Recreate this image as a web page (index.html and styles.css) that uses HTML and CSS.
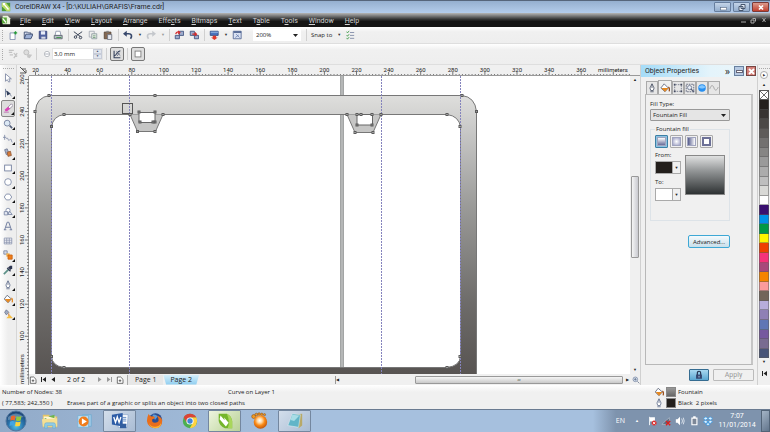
FILE: index.html
```html
<!DOCTYPE html>
<html lang="en">
<head>
    <meta charset="UTF-8">
    <meta name="viewport" content="width=device-width, initial-scale=1.0">
    <title>CorelDRAW X4 - [D:\KULIAH\GRAFIS\Frame.cdr]</title>
    <link rel="stylesheet" href="styles.css">
</head>
<body>

<!-- Title bar -->
<header class="title-bar">
    <svg class="icon" viewBox="0 0 12 12"><rect x="1" y="1" width="10" height="10" fill="#4d9a38"/><path d="M1 1h5l5 6v4H7L1 5z" fill="#b9dc68"/><path d="M3 2l6 7M3 4V2h2" stroke="#fff" stroke-width="1.6" fill="none"/></svg>
    <h1>CorelDRAW X4 - [D:\KULIAH\GRAFIS\Frame.cdr]</h1>
    <div class="win-buttons">
        <button aria-label="Minimize"><svg viewBox="0 0 16 9"><rect x="5.500" y="4.500" width="6" height="2.500" fill="#fff" stroke="#556780" stroke-width=".6"/></svg></button>
        <button aria-label="Restore"><svg viewBox="0 0 16 9"><path d="M7 1.500h4v4H7zM5 3.500h4v4H5z" fill="#e8eef7" stroke="#46566e"/></svg></button>
        <button class="close" aria-label="Close"><svg viewBox="0 0 16 9"><path d="M6 2.500l4 4M10 2.500l-4 4" stroke="#fff" stroke-width="1.700"/></svg></button>
    </div>
</header>

<nav class="menu-bar">
    <svg class="icon" viewBox="0 0 12 12"><path d="M2 1h6l3 3v7H2z" fill="#e9f2dc"/><path d="M1 3h6v7H1z" fill="#58a838"/><path d="M2 4l4 5" stroke="#fff" stroke-width="1.500"/></svg>
    <a href="#"><u>F</u>ile</a>
    <a href="#"><u>E</u>dit</a>
    <a href="#"><u>V</u>iew</a>
    <a href="#"><u>L</u>ayout</a>
    <a href="#"><u>A</u>rrange</a>
    <a href="#">Effe<u>c</u>ts</a>
    <a href="#"><u>B</u>itmaps</a>
    <a href="#"><u>T</u>ext</a>
    <a href="#">T<u>a</u>ble</a>
    <a href="#">T<u>o</u>ols</a>
    <a href="#"><u>W</u>indow</a>
    <a href="#"><u>H</u>elp</a>
    <svg class="doc-buttons" viewBox="0 0 28 8"><path d="M2 6h5M13.500 2.500h3v3M12 4h3v3h-3zM23.500 2l3 4M26.500 2l-3 4" stroke="#aaa" fill="none"/></svg>
</nav>

<!-- Standard toolbar -->
<div class="toolbar standard">
    <i class="grip"></i>
    <button aria-label="New"><svg class="icon" viewBox="0 0 12 12"><path d="M2.500 3.500h6v8h-6z" fill="#fff" stroke="#7888a8"/><path d="M7 3.500h4M9 1.500v4" stroke="#259b37" stroke-width="1.600"/></svg></button>
    <button aria-label="Open"><svg class="icon" viewBox="0 0 12 12"><path d="M1.500 10V2.500h4l1 1h3V5" fill="#dfe5f4" stroke="#314268"/><path d="M1.500 10.500L3.500 5H12l-2.500 5.500z" fill="#9db0d6" stroke="#314268"/></svg></button>
    <button aria-label="Save"><svg class="icon" viewBox="0 0 12 12"><path d="M1.500 1.500h9v9h-9z" fill="#50619f" stroke="#333f78"/><path d="M3.500 1.500h5v4h-5z" fill="#e8ecf8"/><path d="M4 8h5v2.500H4z" fill="#d5d8e5"/></svg></button>
    <button aria-label="Print"><svg class="icon" viewBox="0 0 12 12"><path d="M3.500 1.500h5l1 5h-7z" fill="#fff" stroke="#8a94a8"/><path d="M1.500 6.500h9.500v4H1.500z" fill="#b7bec5" stroke="#59616b"/><path d="M4 9h6" stroke="#35943d"/></svg></button>
    <i class="sep"></i>
    <button aria-label="Cut"><svg class="icon" viewBox="0 0 12 12"><g fill="none" stroke="#3d4658" stroke-width="1.200"><path d="M1 2l8 6M11 2L4 7"/><circle cx="3" cy="8.500" r="1.500"/><circle cx="9" cy="9" r="1.500"/></g></svg></button>
    <button aria-label="Copy"><svg class="icon" viewBox="0 0 12 12"><path d="M1.500 1.500h6v7h-6z" fill="#eee" stroke="#a3a9b3"/><path d="M4.500 4.500h6v6h-6z" fill="#e4ebe3" stroke="#8c9aa0"/><path d="M6 7h3M6 9h3" stroke="#6f9a78"/></svg></button>
    <button aria-label="Paste"><svg class="icon" viewBox="0 0 12 12"><path d="M1.500 2.500h8v8h-8z" fill="#846852" stroke="#564335"/><path d="M4 1h3v2H4z" fill="#888"/><path d="M5.500 5.500h5v6h-5z" fill="#e5e8ef" stroke="#6d7482"/></svg></button>
    <i class="sep"></i>
    <button aria-label="Undo"><svg class="icon" viewBox="0 0 12 12"><path d="M3 4.500h4c3 0 4.500 2.500 2 6" stroke="#36476b" stroke-width="2" fill="none"/><path d="M0 4.500L4.500 1v7z" fill="#36476b"/></svg></button>
    <span class="arrow">▼</span>
    <button aria-label="Redo"><svg class="icon" viewBox="0 0 12 12"><path d="M9 4.500H5c-3 0-4.500 2.500-2 6" stroke="#c4c7cc" stroke-width="2" fill="none"/><path d="M12 4.500L7.500 1v7z" fill="#c4c7cc"/></svg></button>
    <span class="arrow off">▼</span>
    <i class="sep"></i>
    <button aria-label="Import"><svg class="icon" viewBox="0 0 12 12"><path d="M6.500 1.500h5v5h-5zM1.500 6.500h5v4h-5z" fill="#9eaccd" stroke="#3c4e7b"/><path d="M2 5c1-3 3-3 4-2M5 1l2 2-2 2" stroke="#d52b2b" stroke-width="1.400" fill="none"/></svg></button>
    <button aria-label="Export"><svg class="icon" viewBox="0 0 12 12"><path d="M1.500 1.500h5v5h-5zM6.500 6.500h5v4h-5z" fill="#9eaccd" stroke="#3c4e7b"/><path d="M4 5h5M7 3l2 2-2 2" stroke="#d52b2b" stroke-width="1.500" fill="none"/></svg></button>
    <i class="sep"></i>
    <button aria-label="Application launcher"><svg class="icon" viewBox="0 0 12 12"><path d="M1.500 1.500h9.500v5H1.500z" fill="#4b73bd" stroke="#304980"/><path d="M2 2h9v1.500H2z" fill="#8aacdf"/><path d="M4.500 7h4v2h2L6.500 12l-4-3h2z" fill="#e03a2d"/></svg></button>
    <span class="arrow">▼</span>
    <button aria-label="Welcome screen"><svg class="icon" viewBox="0 0 12 12"><path d="M1.500 1.500h9.500v9H1.500z" fill="#d9e1f2" stroke="#4f6491"/><path d="M2 2.500h9" stroke="#4f6491" stroke-width="2"/><path d="M4 9l4-3M5 5l4 4" stroke="#6a7fae"/></svg></button>
    <select class="zoom-level" aria-label="Zoom level"><option>200%</option></select>
    <i class="sep"></i>
    <button class="snap">Snap to</button>
    <span class="arrow">▼</span>
    <button aria-label="Options"><svg class="icon" viewBox="0 0 12 12"><path d="M6 3h5M6 6.500h5M6 10h5" stroke="#7b86a2"/><path d="M2 2l1 1.500L5 1M2 6l1 1.500L5 5M2 9.500L3 11l2-2.500" stroke="#3a9a44" fill="none"/></svg></button>
</div>

<!-- Eraser property bar -->
<div class="toolbar property">
    <i class="grip"></i>
    <svg class="icon" viewBox="0 0 12 12"><path d="M1 1.500h6M1 4h4M2 7h4M7 5l4 4M11 5L7 11" stroke="#c3c3c3" stroke-width="1.500"/></svg>
    <svg class="icon" viewBox="0 0 12 12"><circle cx="4" cy="4" r="3" fill="#ddd" stroke="#bbb"/><path d="M5 6l6 1-3 4-3-1z" fill="#c6c6c6"/></svg>
    <i class="sep"></i>
    <svg class="icon thick" viewBox="0 0 12 12"><circle cx="6" cy="6" r="4" fill="#fff" stroke="#a0a4ac"/><path d="M3 6h6" stroke="#8b91a0"/></svg>
    <div class="spinner">
        <input type="text" value="3,0 mm" aria-label="Eraser thickness">
        <span class="spin"><b>▲</b><b>▼</b></span>
    </div>
    <i class="sep"></i>
    <button class="pressed" aria-label="Auto-reduce nodes"><svg class="icon" viewBox="0 0 12 12"><path d="M2.500 2v8.500H10M3 8c3 0 2-5 7-6" stroke="#34405b" fill="none" stroke-width="1.300"/><path d="M5 3l5 5M6 8.500l3-4" stroke="#5a657f"/></svg></button>
    <i class="sep"></i>
    <button class="pressed" aria-label="Eraser shape"><svg class="icon" viewBox="0 0 12 12"><rect x="2.500" y="2.500" width="7" height="7" fill="#fff" stroke="#777"/></svg></button>
</div>

<main class="workspace">
    <!-- Toolbox -->
    <aside class="toolbox">
        <i class="grip-h"></i>
        <div class="tools">
            <button aria-label="Pick"><svg class="icon" viewBox="0 0 12 12"><path d="M3 1v9l2-2 2 3 1.500-1L7 7h3z" fill="#fff" stroke="#7984a0"/></svg></button>
            <button class="more" aria-label="Shape"><svg class="icon" viewBox="0 0 12 12"><path d="M3 1v10M3 4c5 0 5 3 7 6" stroke="#6a7895" fill="none"/><path d="M4 3l5 4-4 2z" fill="#2c3a58"/></svg></button>
            <button class="more on" aria-label="Eraser"><svg class="icon" viewBox="0 0 12 12"><path d="M6 5l4-4 2 2-4 4z" fill="#fff" stroke="#8a7f96"/><path d="M2 8l4-3.500L8.500 7 5 10H3z" fill="#d944b7"/><path d="M1 11h6" stroke="#b866ad"/></svg></button>
            <button class="more" aria-label="Zoom"><svg class="icon" viewBox="0 0 12 12"><circle cx="5" cy="5" r="3.500" fill="#dce8f4" stroke="#6b7897"/><path d="M8 8l3 3" stroke="#54607c" stroke-width="2"/></svg></button>
            <button class="more" aria-label="Freehand"><svg class="icon" viewBox="0 0 12 12"><path d="M2 1v6M0 4h4M4 6c2-4 2 4 4 1s2 2 3 3" stroke="#7c87a4" fill="none"/></svg></button>
            <button class="more" aria-label="Smart fill"><svg class="icon" viewBox="0 0 12 12"><path d="M2 2l3-1 2 5-3 2z" fill="#a9b3c9" stroke="#6c7690"/><path d="M5 5l4-1 1 5-4 1z" fill="#d97b35" stroke="#8e5a3c"/></svg></button>
            <button class="more" aria-label="Rectangle"><svg class="icon" viewBox="0 0 12 12"><rect x="2" y="2.500" width="8" height="7" fill="#fff" stroke="#6b7899"/></svg></button>
            <button class="more" aria-label="Ellipse"><svg class="icon" viewBox="0 0 12 12"><circle cx="6" cy="6" r="4" fill="#fff" stroke="#7885a4"/></svg></button>
            <button class="more" aria-label="Polygon"><svg class="icon" viewBox="0 0 12 12"><path d="M4 2.500h4L10.500 6 8 9.500H4L1.500 6z" fill="#fff" stroke="#7885a4"/></svg></button>
            <button class="more" aria-label="Basic shapes"><svg class="icon" viewBox="0 0 12 12"><circle cx="6" cy="4" r="2.500" fill="#fff" stroke="#7885a4"/><path d="M1.500 5.500h4v4h-4zM8 5l3 4H6z" fill="#e5e9f3" stroke="#7885a4"/></svg></button>
            <button aria-label="Text"><svg class="icon" viewBox="0 0 12 12"><path d="M2 10.500L5 1.500h2l3 9M3.500 7.500h5M1 10.500h3M8 10.500h3" stroke="#7481a2" stroke-width="1.200" fill="none"/></svg></button>
            <button aria-label="Table"><svg class="icon" viewBox="0 0 12 12"><path d="M1.500 2.500h9v7h-9zM1.500 5h9M1.500 7.500h9M4.500 2.500v7M7.500 2.500v7" stroke="#8993ad" fill="#fff"/></svg></button>
            <button class="more" aria-label="Blend"><svg class="icon" viewBox="0 0 12 12"><path d="M1 1h4v4H1z" fill="#d4dae7" stroke="#7783a1"/><path d="M4 4h4v4H4z" fill="#f4b450"/><path d="M6 6h5v5H6z" fill="#ef7d19" stroke="#c96414"/></svg></button>
            <button class="more" aria-label="Eyedropper"><svg class="icon" viewBox="0 0 12 12"><path d="M1 11l6-6" stroke="#5c9088" stroke-width="2"/><path d="M6 3l3 3 2-2V1H8.500z" fill="#2d3550"/><path d="M5 3.500l4 4" stroke="#2d3550" stroke-width="1.500"/></svg></button>
            <button class="more" aria-label="Outline"><svg class="icon" viewBox="0 0 12 12"><path d="M6 1L3.500 6l1 3h3l1-3zM6 1v5M4 10.500h4" stroke="#65728f" fill="#fff"/></svg></button>
            <button class="more" aria-label="Fill"><svg class="icon" viewBox="0 0 12 12"><path d="M5 1.500L10 6l-4 4.500L1.500 6z" fill="#fff" stroke="#5b6478"/><path d="M2 6h8l-4 4.500z" fill="#e58820"/><path d="M10 5c2 1 1.500 3 1 5" stroke="#e58820" stroke-width="1.500" fill="none"/></svg></button>
            <button class="more" aria-label="Interactive fill"><svg class="icon" viewBox="0 0 12 12"><path d="M4 1l3 3-3 3-2-3z" fill="#a2acc2" stroke="#6c7690"/><path d="M7 4l1 4H6z" fill="#cf7d38"/><path d="M4 11l4-4 4 4z" fill="#f7bd42"/></svg></button>
        </div>
    </aside>

    <section class="drawing">
        <svg class="corner" viewBox="0 0 12 11"><path d="M3 2l6 6M9 5v3H6M3 8h3M5 4h4" stroke="#555" fill="none"/></svg>
        <svg class="ruler-x" id="rulerX"><text x="584" y="7" text-anchor="middle">millimeters</text></svg>
        <svg class="ruler-y" id="rulerY"><text transform="translate(7 293) rotate(-90)" text-anchor="middle">millimeters</text></svg>

        <svg class="canvas">
            <defs>
                <linearGradient id="steel" gradientUnits="userSpaceOnUse" x1="0" y1="96" x2="0" y2="374">
                    <stop offset="0" stop-color="#dededc"/>
                    <stop offset=".12" stop-color="#c9c9c8"/>
                    <stop offset=".4" stop-color="#9a9a98"/>
                    <stop offset=".75" stop-color="#6d6b69"/>
                    <stop offset="1" stop-color="#585452"/>
                </linearGradient>
            </defs>
            <g transform="translate(-29 -76)">
                <rect x="340" y="76" width="4" height="298" fill="#b5b7b7"/>
                <path d="M340.500 76v298M343.500 76v298" stroke="#a3a5a5"/>
                <!-- frame body with its opening -->
                <path fill="url(#steel)" stroke="#777" fill-rule="evenodd" d="M35.500 380V111.500Q36 97 50 95.500H462Q475 97 476.500 111.500V380z M51.500 127V356Q52 366 64 367.500H447Q460 366 460.500 356V127Q459 116 447 114.500H64Q53 116 51.500 127z"/>
                <!-- clips -->
                <path d="M130 114.500L137.500 131.500H155.500L163 114.500" fill="#c6c6c5" stroke="#777"/>
                <path d="M347 114.500L355 132.500H373L381 114.500" fill="#c6c6c5" stroke="#777"/>
                <path d="M139 112.500h16v10h-16zM357 114.500h15.500v10.500H357z" fill="#fff" stroke="#666"/>
                <path d="M51.500 76v298M129.500 76v298M381.500 76v298M460.500 76v298" stroke="#8584bd" stroke-dasharray="2 1"/>
                <rect x="122.500" y="103.500" width="10" height="10" fill="none" stroke="#555"/>
                <g id="nodes"></g>
            </g>
        </svg>

        <div class="scroll-y">
            <span>▲</span>
            <i class="thumb"></i>
            <span>▼</span>
        </div>

        <div class="page-bar">
            <svg class="icon" viewBox="0 0 12 12"><path d="M2 1.500h5L10.500 5v6H2zM4 7h4M6 5v4" stroke="#333" fill="#fff"/></svg>
            <button aria-label="First page"><svg viewBox="0 0 7 7"><path d="M1 1h1v5H1zM6 1v5L2.500 3.500z"/></svg></button>
            <button aria-label="Previous page"><svg viewBox="0 0 7 7"><path d="M5 1v5L1.500 3.500z"/></svg></button>
            <span class="count">2 of 2</span>
            <button class="off" aria-label="Next page"><svg viewBox="0 0 7 7"><path d="M2 1v5l3.500-2.500z"/></svg></button>
            <button class="off" aria-label="Last page"><svg viewBox="0 0 7 7"><path d="M5 1h1v5H5zM1 1v5l3.500-2.500z"/></svg></button>
            <svg class="icon" viewBox="0 0 12 12"><path d="M2 1.500h5L10.500 5v6H2zM4 7h4M6 5v4" stroke="#333" fill="#fff"/></svg>
            <div class="tabs">
                <a class="tab" href="#">Page 1</a>
                <a class="tab current" href="#">Page 2</a>
            </div>
            <div class="scroll-x">
                <span>◀</span>
                <div class="track"><i class="thumb">ııı</i></div>
                <span>▶</span>
                <svg class="icon" viewBox="0 0 12 12"><circle cx="5" cy="5" r="3.500" fill="#dce8f4" stroke="#6b7897"/><path d="M8 8l3 3M5 3v4M3 5h4" stroke="#54607c"/></svg>
            </div>
        </div>
    </section>

    <!-- Object Properties docker -->
    <aside class="docker">
        <div class="docker-head">
            <h2>Object Properties</h2>
            <span>»</span>
            <button aria-label="Roll up"><svg viewBox="0 0 9 9"><rect x="1.500" y="3.500" width="6" height="2" fill="#fff" stroke="#667"/></svg></button>
            <button class="close" aria-label="Close docker"><svg viewBox="0 0 9 9"><path d="M2 2l5 5M7 2L2 7" stroke="#fff" stroke-width="1.800"/></svg></button>
        </div>
        <div class="docker-tabs">
            <button aria-label="Outline"><svg class="icon" viewBox="0 0 12 12"><path d="M6 1L3.500 6l1 3h3l1-3zM6 1v5M4 10.500h4" stroke="#4b5365" fill="#fff"/></svg></button>
            <button class="current" aria-label="Fill"><svg class="icon" viewBox="0 0 12 12"><path d="M5 1L10 6l-4 4.500L1 6z" fill="#fff" stroke="#5b6478"/><path d="M1.500 6h8.500l-4 4.500z" fill="#e58820"/><path d="M10 5c2 1 1.500 3 1 5" stroke="#9a4c18" stroke-width="1.500" fill="none"/></svg></button>
            <button aria-label="General"><svg class="icon" viewBox="0 0 12 12"><rect x="2" y="2" width="8" height="8" fill="none" stroke="#555d74" stroke-dasharray="1 1"/><path d="M1 1h2v2H1zM9 1h2v2H9zM1 9h2v2H1zM9 9h2v2H9z" fill="#444b60"/></svg></button>
            <button aria-label="Detail"><svg class="icon" viewBox="0 0 12 12"><rect x="1.500" y="1.500" width="9" height="9" fill="none" stroke="#555d74" stroke-dasharray="2 1"/><circle cx="5.500" cy="5.500" r="2.500" fill="#e9eef6" stroke="#6c7790"/><path d="M7 7l4 4" stroke="#555d74" stroke-width="1.500"/></svg></button>
            <button aria-label="Internet"><svg class="icon" viewBox="0 0 12 12"><circle cx="6" cy="6" r="4.500" fill="#278ff0"/><path d="M2 5c2-3 6-3 8 0-2 2-6 2-8 0z" fill="#83c7ff"/></svg></button>
            <button aria-label="Curve"><svg class="icon" viewBox="0 0 12 12"><path d="M1 7c2-6 4-4 5-1s3 4 5-1" stroke="#9b9b9b" fill="none"/></svg></button>
        </div>
        <div class="docker-panel">
            <label for="fillType">Fill Type:</label>
            <select id="fillType"><option>Fountain Fill</option></select>
            <fieldset>
                <legend>Fountain fill</legend>
                <div class="fill-kinds">
                    <button class="linear on" aria-label="Linear"><i></i></button>
                    <button class="radial" aria-label="Radial"><i></i></button>
                    <button class="conical" aria-label="Conical"><i></i></button>
                    <button class="square" aria-label="Square"><i></i></button>
                </div>
                <div class="fill-colors">
                    <div class="pickers">
                        <span>From:</span>
                        <button class="picker from" aria-label="From color"><i></i><b>▼</b></button>
                        <span>To:</span>
                        <button class="picker to" aria-label="To color"><i></i><b>▼</b></button>
                    </div>
                    <div class="preview"></div>
                </div>
            </fieldset>
            <button class="advanced">Advanced...</button>
        </div>
        <div class="docker-foot">
            <button class="lock" aria-label="Lock"><svg class="icon" viewBox="0 0 12 12"><path d="M4 6V3.500a2 2 0 0 1 4 0V6" stroke="#26334f" stroke-width="1.400" fill="none"/><rect x="2.500" y="5.500" width="7" height="5" fill="#34466f"/><path d="M6 7v2" stroke="#c8def2"/></svg></button>
            <button class="apply" disabled>Apply</button>
        </div>
    </aside>

    <!-- Color palette -->
    <aside class="palette">
        <i class="grip-h"></i>
        <button class="round" aria-label="Palette menu">▶</button>
        <span>▲</span>
        <button class="none" aria-label="No color"><svg viewBox="0 0 9 9"><path d="M0 0l9 9M9 0L0 9" stroke="#333" stroke-width=".8"/></svg></button>
        <div class="swatches" id="swatches"></div>
        <span>▼</span>
        <button class="expand" aria-label="Expand palette"><svg viewBox="0 0 7 7"><path d="M1 1h1v5H1zM6 1v5L2.500 3.500z"/></svg></button>
    </aside>
</main>

<footer class="status-bar">
    <div class="status-row">
        <span class="node-count">Number of Nodes: 38</span>
        <span class="layer">Curve on Layer 1</span>
        <span class="paint"><svg class="icon" viewBox="0 0 12 12"><path d="M5 1.500L10 6l-4 4.500L1.500 6z" fill="#fff" stroke="#5b6478"/><path d="M2 6h8l-4 4.500z" fill="#e58820"/><path d="M10 5c2 1 1.500 3 1 5" stroke="#9a4c18" stroke-width="1.500" fill="none"/></svg><i class="chip fountain"></i>Fountain</span>
    </div>
    <div class="status-row">
        <span class="coords">( 77,583; 242,350 )</span>
        <span class="hint">Erases part of a graphic or splits an object into two closed paths</span>
        <span class="paint"><svg class="icon" viewBox="0 0 12 12"><path d="M6 1L3.500 6l1 3h3l1-3zM6 1v5M4 10.500h4" stroke="#65728f" fill="#fff"/></svg><i class="chip black"></i>Black&nbsp; 2 pixels</span>
    </div>
</footer>

<!-- Windows taskbar -->
<div class="taskbar">
    <button class="start" aria-label="Start"><svg viewBox="0 0 22 22">
        <defs><radialGradient id="orb" cx=".5" cy=".75" r=".7"><stop offset="0" stop-color="#53c5ea"/><stop offset=".5" stop-color="#2b77ae"/><stop offset="1" stop-color="#1d4474"/></radialGradient></defs>
        <circle cx="11" cy="11" r="10" fill="url(#orb)" stroke="#52779f"/><path d="M3 7q8-7 16 0-8 1-16 3z" fill="#fff" opacity=".25"/>
        <path d="M6 6.500q2.500-1.500 4.500-.5l-.7 4.500q-2-1-4.500.3z" fill="#e9682e"/><path d="M11.500 6.300q2.500 1 5-.3l-.8 4.600q-2.500 1-4.800 0z" fill="#91c83e"/><path d="M5 11.700q2.500-1.500 4.600-.2L9 15.700q-2-1-4.500.3z" fill="#42a5e4"/><path d="M10.700 11.700q2.500 1 5-.2l-.8 4.300q-2.500 1-4.800.2z" fill="#fbd23d"/></svg></button>
    <a class="task" href="#" aria-label="Explorer"><svg viewBox="0 0 20 20"><path d="M2 3h7l1 2h8v12H2z" fill="#e5c466"/><path d="M3 5h13v9H3z" fill="#fff7d5"/><path d="M4 7h2v1H4zM8 5l7-2v4z" fill="#6fb44c"/><path d="M1 8l17-1v9H2z" fill="#f5df93"/><path d="M4 18v-4q0-2 2-2h8q2 0 2 2v4h-3v-3H7v3z" fill="#8fcbe6" stroke="#66a7ca" stroke-width=".6"/></svg></a>
    <a class="task" href="#" aria-label="Media Player"><svg viewBox="0 0 20 20"><path d="M7 3h10v13H7z" fill="#9ecae8" stroke="#77abd0"/><path d="M2 4h12v13H2z" fill="#bfe0f4" stroke="#7bb1d4"/><circle cx="8.500" cy="10.500" r="5.500" fill="#f07c1c"/><path d="M6.500 7l5.500 3.500-5.500 3.500z" fill="#fff"/></svg></a>
    <a class="task open" href="#" aria-label="Word"><svg viewBox="0 0 20 20"><path d="M8 3h11l-1 14H8z" fill="#fff" stroke="#7799c7" stroke-width=".6"/><path d="M13 6h4M13 8h4M13 10h4M11 14h6" stroke="#5783c0"/><path d="M1 3l12-2v15L1 14z" fill="#2d5ca6"/><path d="M3 5.500l2 6 2-6 2 6 2-6" stroke="#fff" stroke-width="1.500" fill="none"/><path d="M10 13h7v5h-7z" fill="#345f9f"/></svg></a>
    <a class="task" href="#" aria-label="Firefox"><svg viewBox="0 0 20 20"><circle cx="10.500" cy="9" r="7.500" fill="#2b4d91"/><path d="M7 3q4-1 6 2l-3 4z" fill="#5c9bd6"/><path d="M3 2q0 2 3 3 2-1 4 1-1 2-3 2-1 4 3 4 3 0 4-2 0-4-2-6 6 2 6 6 0 8-8 8-8-1-9-8 0-4 2-8z" fill="#e96e1c"/><path d="M3 12q3 6 9 4 4-1 5-5 0 7-7 7-5 0-7-6z" fill="#f9b534"/></svg></a>
    <a class="task" href="#" aria-label="Chrome"><svg viewBox="0 0 20 20"><circle cx="10" cy="10" r="8" fill="#4caf50"/><path d="M3 6Q5 2 10 2q5 0 7 4H10L6 11z" fill="#db4437"/><path d="M10 6h7.200q2 6-2 10-2 2-5.500 2l3.500-6z" fill="#ffd23f"/><circle cx="10" cy="10" r="4" fill="#fff"/><circle cx="10" cy="10" r="3" fill="#4285d8"/></svg></a>
    <a class="task open corel" href="#" aria-label="CorelDRAW"><svg viewBox="0 0 20 20"><path d="M3 2h9q5 2 6 8v8h-8Q4 16 3 10z" fill="#74b52b"/><path d="M12 2q5 2 6 8v8h-5q3-7-1-16z" fill="#a9d65b"/><path d="M5 4l7 8-1 4-7-8zM9 6l5 6-3 4z" fill="#fff"/></svg></a>
    <a class="task" href="#" aria-label="GOM Player"><svg viewBox="0 0 20 20"><defs><radialGradient id="gom" cx=".45" cy=".4" r=".6"><stop offset="0" stop-color="#fff"/><stop offset=".3" stop-color="#ffd7a1"/><stop offset=".6" stop-color="#fb8b16"/><stop offset="1" stop-color="#c3580c"/></radialGradient></defs><g fill="#f19b21" stroke="#8b4b11" stroke-width=".6"><circle cx="3" cy="5" r="2.200"/><circle cx="6" cy="2.800" r="1.500"/><circle cx="9" cy="2.300" r="1.400"/><circle cx="12" cy="2.500" r="1.300"/><circle cx="15" cy="3" r="1.200"/></g><circle cx="10.500" cy="11" r="7.500" fill="url(#gom)"/></svg></a>
    <a class="task open" href="#" aria-label="Notepad"><svg viewBox="0 0 20 20"><path d="M7 3l11-1v13l-4 3z" fill="#b8a968"/><path d="M7 2l9 1-2 14-12-2z" fill="#62b5c8" stroke="#e1f1f4" stroke-width=".6"/><path d="M7 3l8 1-6 6-4-1z" fill="#a8dde6"/></svg></a>
    <div class="tray">
        <span>EN</span>
        <span class="up">▲</span>
        <svg class="icon" viewBox="0 0 12 12"><path d="M3 1v10" stroke="#fff"/><path d="M3.500 1.500h6v5h-6z" fill="#fff"/><circle cx="8.500" cy="8.500" r="3" fill="#d93030"/><path d="M7 7l3 3M10 7l-3 3" stroke="#fff"/></svg>
        <svg class="icon" viewBox="0 0 12 12"><path d="M1 10l9-8v8z" fill="#59687c" stroke="#ccd5df" stroke-width=".6"/><path d="M6 6l5 5M11 6l-5 5" stroke="#d82020" stroke-width="1.800"/></svg>
        <svg class="icon" viewBox="0 0 12 12"><path d="M1 4h2l3-3v10L3 8H1z" fill="#fff"/><path d="M8 3q2 3 0 6M10 2q2 4 0 8" stroke="#e7edf4" fill="none"/></svg>
        <svg class="icon" viewBox="0 0 12 12"><path d="M3.500 2.500h6v8h-6zM5 1h3" stroke="#fff" stroke-width="1.400" fill="#7c8797"/></svg>
        <svg class="icon" viewBox="0 0 12 12"><path d="M3.500 1L6 3 3 5 .5 3zM8.500 1l3 2L9 5 6 3zM3 5l3 2-2.500 2L.5 7zM9 5l2.500 2-3 2L6 7zM6 8l2.500 2L6 11.500 3.500 10z" fill="#dff1ff" stroke="#2f99e8" stroke-width=".8"/></svg>
        <time class="clock">7:07<br>11/01/2014</time>
    </div>
    <button class="show-desktop" aria-label="Show desktop"></button>
</div>

<script>
    const NS = 'http://www.w3.org/2000/svg';

    function add(parent, name, attrs, text) {
        const el = document.createElementNS(NS, name);
        for (const key in attrs) el.setAttribute(key, attrs[key]);
        if (text) el.textContent = text;
        parent.appendChild(el);
    }

    // 20 mm on the ruler at 200% zoom
    const step = 32.1;
    const rulerX = document.getElementById('rulerX');
    const rulerY = document.getElementById('rulerY');

    for (let i = 0; i < 186; i++) {
        const x = 6.5 + i * step / 10;
        add(rulerX, 'path', {d: `M${x} 11v${i % 10 ? -2 : -4}`});
        if (i % 10 === 0 && i < 180) add(rulerX, 'text', {x: x, y: 7, 'text-anchor': 'middle'}, 20 + i * 2);
    }

    for (let i = 0; i < 94; i++) {
        const y = 3.5 + i * step / 10;
        add(rulerY, 'path', {d: `M12 ${y}h${i % 10 ? -2 : -4}`});
        if (i % 10 === 0 && i < 90) add(rulerY, 'text', {transform: `translate(7 ${y}) rotate(-90)`, 'text-anchor': 'middle'}, 260 - i * 2);
    }

    // Curve nodes
    const points = [[49, 95.5], [155, 95.5], [35, 111.5], [64, 114.5], [51.5, 126.5], [130, 114.5], [137.5, 131.5], [155, 131.5], [163, 114.5],
        [139, 112], [155, 112], [155, 122], [140, 122], [153, 122], [347, 114.5], [355, 132.5], [373, 132.5], [381, 114.5], [357, 114.5], [361, 114.5],
        [372, 114.5], [372, 125], [357, 125], [447, 114.5], [460, 126.5], [462, 95.5], [476.5, 111.5], [51.5, 356.5], [64, 367.5], [447, 367.5], [460, 356.5]];
    const nodes = document.getElementById('nodes');
    points.forEach(p => add(nodes, 'rect', {x: p[0] - 1, y: p[1] - 1, width: 2, height: 2}));

    const colors = ['#231f1c', '#383432', '#4c4947', '#5f5c5a', '#737170', '#868584', '#9a9a9a', '#acacac', '#bebebe', '#d9d9d6', '#ffffff',
        '#3a1070', '#0091e8', '#009846', '#fff500', '#ef3f00', '#f5327a', '#a8487b', '#f58400', '#fb9b9b', '#72655a', '#b7aeda', '#8f80b5',
        '#6076b5', '#76599f', '#796c91', '#485478'];
    colors.forEach(color => {
        const swatch = document.createElement('button');
        swatch.style.background = color;
        swatch.setAttribute('aria-label', color);
        document.getElementById('swatches').appendChild(swatch);
    });
</script>

</body>
</html>
```
FILE: styles.css
```css
* {
    box-sizing: border-box;
}

body {
    margin: 0;
    height: 100vh;
    display: flex;
    flex-direction: column;
    overflow: hidden;
    background: #f0f0f0;
    color: #222;
    font-family: "Open Sans", "Noto Sans", sans-serif;
    font-size: 6px;
    line-height: 8px;
}

button, input, select {
    font: inherit;
    color: inherit;
    margin: 0;
    padding: 0;
    border: 0;
    background: none;
}

button {
    display: flex;
    align-items: center;
    justify-content: center;
}

a {
    color: inherit;
    text-decoration: none;
}

h1, h2 {
    margin: 0;
    font-family: Roboto, sans-serif;
    font-size: 7px;
    font-weight: normal;
}

svg {
    display: block;
    flex: none;
}

.icon {
    width: 10px;
    height: 10px;
}

/* Title and menu */
.title-bar {
    display: flex;
    align-items: center;
    height: 13px;
    flex: none;
    padding: 0 1px;
    gap: 4px;
    background: linear-gradient(#95afcf, #b4cceb);
    border-top: 1px solid #56657b;
}

.title-bar h1 {
    flex: 1;
    line-height: 10px;
}

.win-buttons {
    display: flex;
    gap: 2px;
}

.win-buttons button {
    width: 17px;
    height: 10px;
    border: 1px solid #677e9e;
    border-radius: 1px;
    background: linear-gradient(#c4d4e8, #93adcd);
}

.win-buttons svg {
    width: 16px;
    height: 9px;
}

.win-buttons .close {
    border-color: #7c3a36;
    background: linear-gradient(#dc9a8c, #c2402e);
}

.menu-bar {
    display: flex;
    align-items: center;
    height: 14px;
    flex: none;
    padding: 0 3px 0 1px;
    gap: 11px;
    color: #d2d2d2;
    font-family: Roboto, sans-serif;
    font-size: 7px;
    background: linear-gradient(#b5b5b5 0, #8a8a8a 15%, #333 45%, #151515 60%);
}

.menu-bar .icon {
    margin-right: -2px;
}

.menu-bar a {
    padding-top: 1px;
}

.menu-bar .doc-buttons {
    width: 28px;
    height: 8px;
    margin-left: auto;
}

/* Toolbars */
.toolbar {
    display: flex;
    align-items: center;
    flex: none;
    gap: 5px;
    padding-left: 2px;
    background: linear-gradient(#fff, #f0f0f0 30%, #eee);
    border-bottom: 1px solid #dedede;
}

.standard {
    height: 17px;
}

.property {
    height: 21px;
}

.grip {
    width: 1px;
    height: 11px;
    border-left: 1px dotted #aaa;
}

.grip-h {
    width: 11px;
    height: 1px;
    border-top: 1px dotted #aaa;
}

.sep {
    width: 1px;
    height: 12px;
    margin-right: -1px;
    background: #d0d0d0;
}

.property .sep {
    margin: 0 -2px;
}

.arrow {
    width: 3px;
    font-size: 4px;
    color: #333;
}

.off {
    color: #999;
}

.zoom-level {
    width: 48px;
    height: 12px;
    margin-left: 6px;
    padding-left: 3px;
}

select {
    appearance: none;
    background: #fff url("data:image/svg+xml,%3Csvg xmlns='http://www.w3.org/2000/svg' width='5' height='3'%3E%3Cpath d='M0 0h5L2.500 3z' fill='%23222'/%3E%3C/svg%3E") no-repeat right 3px center;
}

.property .thick {
    width: 8px;
    margin: 0 -4px 0 3px;
}

.spinner {
    display: flex;
    width: 51px;
    height: 12px;
    background: #fff;
    border: 1px solid #e3e3e3;
}

.spinner input {
    flex: 1;
    min-width: 0;
    padding-left: 1px;
}

.spin {
    display: flex;
    flex-direction: column;
    width: 9px;
    font-size: 3px;
    text-align: center;
    color: #46536f;
    background: #e1e5ee;
}

.spin b {
    flex: 1;
    border: 1px solid #c7ccd8;
    line-height: 3px;
}

.pressed {
    width: 14px;
    height: 14px;
    border: 1px solid #777;
    border-radius: 2px;
    background: #dedede;
}

/* Workspace */
.workspace {
    flex: 1;
    min-height: 0;
    display: flex;
}

.toolbox {
    width: 17px;
    display: flex;
    flex-direction: column;
    align-items: center;
    padding-top: 3px;
    background: linear-gradient(90deg, #fff, #eee 50%);
    border-right: 1px solid #d6d6d6;
}

.tools {
    display: flex;
    flex-direction: column;
    height: 250px;
    margin-top: 2px;
}

.tools button {
    position: relative;
    flex: 1;
    width: 14px;
}

.tools .on {
    border: 1px solid #888;
    border-radius: 2px;
    background: #ddd;
}

.more::after {
    content: "";
    position: absolute;
    right: 0;
    bottom: 1px;
    border-left: 3px solid transparent;
    border-bottom: 3px solid #111;
}

.drawing {
    flex: 1;
    min-width: 0;
    display: grid;
    grid-template-columns: 12px 1fr 10px;
    grid-template-rows: 11px 1fr 11px;
    background: #f0f0f0;
}

.corner {
    width: 12px;
    height: 11px;
}

.ruler-x {
    grid-column: 2 / 4;
    width: 100%;
    height: 11px;
    border-bottom: 1px solid #999;
}

.ruler-y {
    grid-row: 2 / 4;
    width: 12px;
    height: 100%;
    border-right: 1px solid #999;
    overflow: visible;
}

.ruler-x path, .ruler-y path {
    stroke: #777;
    stroke-width: 1;
}

.ruler-x text, .ruler-y text {
    fill: #222;
    font-family: Roboto, sans-serif;
}

.canvas {
    width: 100%;
    height: 100%;
    background: #fff;
    overflow: hidden;
}

#nodes rect {
    fill: #999;
    stroke: #5a5a5a;
}

.scroll-y {
    display: flex;
    flex-direction: column;
    align-items: center;
    font-size: 4px;
}

.scroll-y .thumb {
    width: 8px;
    height: 82px;
    margin: 92px 0 auto;
    border: 1px solid #999;
    border-radius: 1px;
    background: linear-gradient(90deg, #f5f5f5, #c9cad0);
}

.page-bar {
    grid-column: 2 / 4;
    display: flex;
    align-items: center;
    gap: 3px;
    overflow: hidden;
}

.page-bar .icon {
    width: 8px;
    height: 8px;
}

.page-bar button {
    width: 7px;
}

.page-bar button svg, .expand svg {
    width: 7px;
    height: 7px;
    fill: currentColor;
}

.page-bar .count {
    margin: 0 8px 0 7px;
    font-size: 7px;
}

.tabs {
    display: flex;
}

.tab {
    width: 36px;
    height: 10px;
    line-height: 10px;
    font-size: 7px;
    text-align: center;
    background: #e7e7e7;
    border-left: 1px solid #aaa;
}

.tab.current {
    border: 0;
    background: linear-gradient(#d6effb, #8dcdf0);
    clip-path: polygon(0 0, 100% 0, 92% 100%, 8% 100%);
}

.scroll-x {
    display: flex;
    align-items: center;
    width: 305px;
    margin-left: auto;
    gap: 3px;
    border-left: 1px solid #999;
    font-size: 4px;
}

.track {
    flex: 1;
}

.track .thumb {
    display: block;
    width: 74%;
    height: 8px;
    margin-left: auto;
    border: 1px solid #999;
    border-radius: 1px;
    background: linear-gradient(#f5f5f5, #c9c9c9);
    line-height: 6px;
    text-align: center;
}

/* Docker */
.docker {
    width: 118px;
    display: flex;
    flex-direction: column;
    border-left: 1px solid #d0d0d0;
    border-right: 1px solid #d0d0d0;
}

.docker-head {
    display: flex;
    align-items: center;
    height: 12px;
    gap: 2px;
    padding: 0 1px 0 4px;
    background: linear-gradient(90deg, #a5dcf8, #e4f4fb 60%, #eef5f8);
}

.docker-head h2 {
    flex: 1;
}

.docker-head span {
    margin-right: 2px;
    font-size: 10px;
}

.docker-head button {
    width: 10px;
    height: 10px;
    border: 1px solid #69809f;
    background: #b6c9e2;
}

.docker-head button svg {
    width: 9px;
    height: 9px;
}

.docker-head .close {
    border-color: #774542;
    background: #d27e77;
}

.docker-tabs {
    display: flex;
    align-items: flex-end;
    height: 17px;
    padding-left: 5px;
}

.docker-tabs button {
    width: 12px;
    height: 13px;
    border: 1px solid #aaa;
    border-bottom: 0;
    background: #e6e6e6;
}

.docker-tabs .current {
    width: 14px;
    height: 14px;
    background: #f0f0f0;
}

.docker-panel {
    flex: 1;
    display: flex;
    flex-direction: column;
    margin: 0 4px;
    padding: 5px 5px 0 4px;
    border: 1px solid #b8b8b8;
    border-right: 2px solid #c5c5c5;
}

.docker-panel select {
    width: 80px;
    height: 12px;
    margin-top: 1px;
    padding-left: 2px;
    border: 1px solid #999;
    border-radius: 1px;
    background-color: #e5e5e5;
}

.docker-panel fieldset {
    width: 80px;
    height: 96px;
    margin: 4px 0 14px;
    padding: 2px 4px 0;
    border: 1px solid #dde3e8;
}

.docker-panel legend {
    padding: 0 1px;
    font-size: 6px;
}

.fill-kinds {
    display: flex;
    gap: 2px;
}

.fill-kinds button {
    width: 13px;
    height: 13px;
    border: 1px solid #aaa;
    border-radius: 1px;
}

.fill-kinds .on {
    border-color: #3c7fa5;
    background: #8cc3e2;
}

.fill-kinds i {
    width: 9px;
    height: 9px;
    border: 1px solid #a0a4bf;
}

.linear i {
    background: linear-gradient(#fff, #666c99);
}

.radial i {
    background: radial-gradient(#fff, #9da1c5);
}

.conical i {
    background: linear-gradient(90deg, #555c8c, #fff);
}

.fill-kinds .square i {
    background: #fff;
    border: 2px solid #6d7197;
}

.fill-colors {
    display: flex;
    gap: 4px;
    margin-top: 3px;
}

.pickers {
    display: flex;
    flex-direction: column;
    gap: 2px;
}

.picker {
    width: 26px;
    height: 13px;
    margin-bottom: 2px;
    border: 1px solid #aaa;
}

.picker i {
    flex: 1;
    align-self: stretch;
}

.picker b {
    width: 8px;
    align-self: stretch;
    font-size: 4px;
    line-height: 11px;
    border-left: 1px solid #aaa;
}

.from i {
    background: #231f1c;
}

.to i {
    background: #fff;
}

.preview {
    width: 40px;
    height: 40px;
    margin-top: 4px;
    border: 1px solid #888;
    background: linear-gradient(#e0e1e1, #919495 40%, #2e3233);
}

.advanced {
    width: 42px;
    height: 13px;
    margin-left: 38px;
    border: 1px solid #3ea8d5;
    border-radius: 2px;
    background: linear-gradient(#f5fafc, #c8dfeb);
}

.docker-foot {
    display: flex;
    justify-content: flex-end;
    gap: 4px;
    padding: 4px 3px 4px 0;
}

.lock {
    width: 20px;
    height: 12px;
    border: 1px solid #356c91;
    border-radius: 1px;
    background: linear-gradient(#a8d8f0, #5ba7d1);
}

.apply {
    width: 41px;
    height: 12px;
    border: 1px solid #bbb;
    border-radius: 1px;
    font-family: Roboto, sans-serif;
    font-size: 7px;
    color: #999;
}

/* Palette */
.palette {
    width: 12px;
    display: flex;
    flex-direction: column;
    align-items: center;
    padding: 3px 0 8px;
    font-size: 4px;
}

.palette .round {
    width: 8px;
    height: 8px;
    margin: 2px 0;
    border: 1px solid #aaa;
    border-radius: 50%;
    background: #fff;
    font-size: 3px;
}

.palette .none {
    width: 10px;
    height: 10px;
    margin: 1px 0 0;
    border: 1px solid #555;
    background: #fff;
}

.palette .none svg {
    width: 8px;
    height: 8px;
}

.swatches {
    flex: 1;
    width: 10px;
    display: flex;
    flex-direction: column;
}

.swatches button {
    flex: 1;
    border: 1px solid rgba(90, 90, 90, 0.5);
    border-top: 0;
}

.palette .expand {
    height: 8px;
    margin-top: 3px;
}

/* Status bar */
.status-bar {
    flex: none;
    height: 24px;
    padding: 1px 2px;
    background: linear-gradient(#fff, #f0f0f0 30%);
}

.status-row {
    display: flex;
    align-items: center;
    height: 11px;
}

.node-count {
    width: 226px;
}

.coords {
    width: 65px;
}

.paint {
    display: flex;
    align-items: center;
    gap: 2px;
    width: 114px;
    margin-left: auto;
}

.chip {
    width: 10px;
    height: 10px;
    border: 1px solid #888;
}

.fountain {
    background: linear-gradient(#999, #666);
}

.black {
    background: #231f1c;
}

/* Taskbar */
.taskbar {
    flex: none;
    height: 23px;
    display: flex;
    align-items: center;
    background: linear-gradient(90deg, #92abc9, #a6c0de 40%, #a6c0de 77%, #7e93ad 80%, #7e93ad);
    border-top: 1px solid #6a7b91;
}

.start {
    width: 32px;
}

.start svg {
    width: 22px;
    height: 22px;
}

.task {
    width: 33px;
    height: 22px;
    margin: 0 1px;
    display: flex;
    align-items: center;
    justify-content: center;
}

.task svg {
    width: 18px;
    height: 18px;
}

.open {
    border: 1px solid #74879f;
    border-radius: 1px;
    background: linear-gradient(135deg, #d3deeb, #a9bcd4);
}

.corel {
    background: linear-gradient(135deg, #eef5df, #b8d196);
}

.tray {
    display: flex;
    align-items: center;
    gap: 4px;
    margin-left: auto;
    color: #fff;
}

.tray > span:first-child {
    font-size: 7px;
}

.tray .up {
    margin: 0 4px 0 6px;
    font-size: 4px;
}

.clock {
    width: 40px;
    font-family: Roboto, sans-serif;
    font-size: 7px;
    line-height: 9px;
    text-align: center;
}

.show-desktop {
    width: 9px;
    height: 22px;
    margin-left: 4px;
    border: 1px solid #536478;
    background: linear-gradient(135deg, #a4b4c6, #62758c);
}
```
